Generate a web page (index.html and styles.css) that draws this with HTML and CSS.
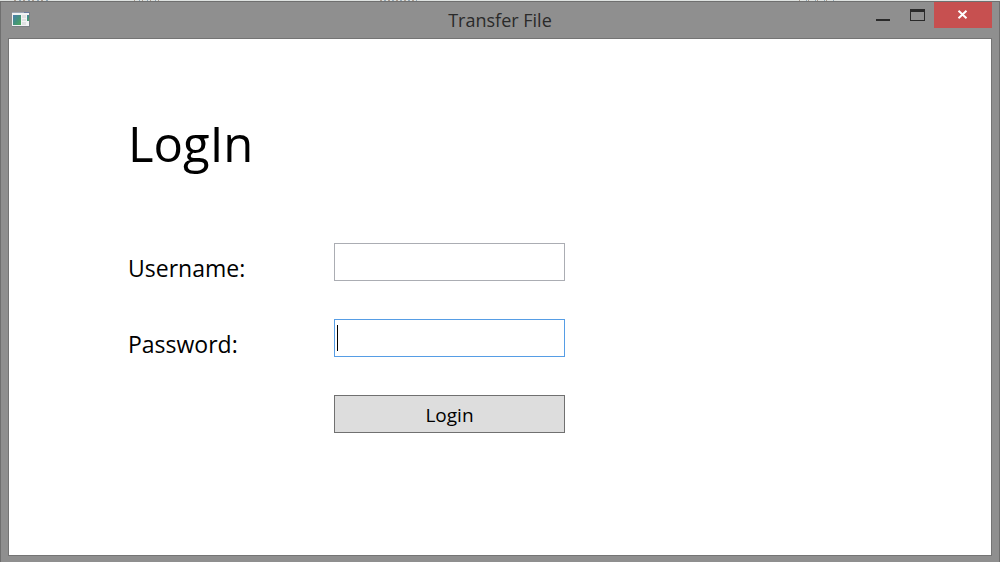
FILE: index.html
```html
<!DOCTYPE html>
<html lang="en">
<head>
<meta charset="utf-8">
<title>Transfer File</title>
<link rel="stylesheet" href="styles.css">
</head>
<body>
<div class="desktop-edge"></div>
<div class="window">
  <header class="titlebar">
    <svg class="app-icon" width="18" height="15" viewBox="0 0 18 15" aria-hidden="true">
      <defs>
        <linearGradient id="pane" x1="0" y1="0" x2="1" y2="1">
          <stop offset="0" stop-color="#4a7db0"/>
          <stop offset="0.5" stop-color="#43917f"/>
          <stop offset="1" stop-color="#4faa5b"/>
        </linearGradient>
      </defs>
      <rect x="0" y="0" width="18" height="15" fill="#7b8086"/>
      <rect x="0" y="0" width="12" height="1" fill="#9ea6b4"/>
      <rect x="12" y="0" width="5" height="1" fill="#6a7ba0"/>
      <rect x="0" y="1" width="17" height="13" fill="#f2f3f4"/>
      <rect x="1" y="3" width="8" height="10" fill="url(#pane)"/>
      <path d="M10 3h4v3h-4zM10 7h4v2h-4zM10 10h4v3h-4z" fill="#dfe1e2"/>
      <rect x="15" y="3" width="2" height="6" fill="url(#pane)"/>
    </svg>
    <h2 class="title">Transfer File</h2>
    <div class="controls">
      <button class="control" type="button" aria-label="Minimize">
        <svg width="14" height="12" viewBox="0 0 14 12"><rect y="10" width="14" height="2" fill="#2a2a2a"/></svg>
      </button>
      <button class="control" type="button" aria-label="Maximize">
        <svg width="15" height="12" viewBox="0 0 15 12"><path d="M0 0h15v12H0zM1 3v8h13V3z" fill="#2a2a2a" fill-rule="evenodd"/></svg>
      </button>
      <button class="control close" type="button" aria-label="Close">
        <svg width="12" height="10" viewBox="0 0 12 10"><path d="M1.500 0.800L9.500 8.200M9.500 0.800L1.500 8.200" stroke="#fff" stroke-width="2"/></svg>
      </button>
    </div>
  </header>
  <main class="client">
    <h1 class="heading">LogIn</h1>
    <form class="form">
      <label class="label" for="username">Username:</label>
      <input class="field" id="username" type="text">
      <label class="label" for="password">Password:</label>
      <div class="field-wrap">
        <input class="field active" id="password" type="password">
        <span class="caret"></span>
      </div>
      <button class="submit" type="button">Login</button>
    </form>
  </main>
</div>
</body>
</html>
```
FILE: styles.css
```css
* {
  box-sizing: border-box;
}

body {
  margin: 0;
  min-height: 100vh;
  display: flex;
  flex-direction: column;
  font-family: "Open Sans", "Noto Sans", sans-serif;
  color: #000;
  background: #8f8f8f;
}

.desktop-edge {
  height: 1px;
  background:
    repeating-linear-gradient(90deg, #a99a8c 0 2px, #dfe3e1 2px 5px, #8fa5b5 5px 7px, #dfe3e1 7px 9px) 14px 0 / 35px 1px no-repeat,
    repeating-linear-gradient(90deg, #a99a8c 0 1px, #dfe3e1 1px 5px, #8fa5b5 5px 6px, #dfe3e1 6px 8px) 134px 0 / 28px 1px no-repeat,
    repeating-linear-gradient(90deg, #a99a8c 0 2px, #dfe3e1 2px 4px, #8fa5b5 4px 6px, #dfe3e1 6px 8px) 380px 0 / 37px 1px no-repeat,
    repeating-linear-gradient(90deg, #a99a8c 0 1px, #dfe3e1 1px 7px, #8fa5b5 7px 8px, #dfe3e1 8px 9px) 799px 0 / 36px 1px no-repeat,
    #dfe3e1;
}

.window {
  flex: 1;
  display: flex;
  flex-direction: column;
  padding: 0 7px 6px;
  border: 1px solid #6f6f6f;
  border-bottom: 0;
}

.titlebar {
  display: grid;
  grid-template-columns: 1fr auto 1fr;
  height: 36px;
}

.app-icon {
  margin: 10px 0 0 4px;
}

.title {
  margin: 0;
  font-size: 18px;
  font-weight: 400;
  line-height: 36px;
  color: #2a2a2a;
}

.controls {
  display: flex;
  justify-content: flex-end;
  align-items: flex-start;
}

.control {
  display: flex;
  align-items: center;
  justify-content: center;
  width: 34px;
  height: 26px;
  padding: 0;
  border: 0;
  background: transparent;
}

.close {
  width: 58px;
  background: #c75050;
}

.client {
  flex: 1;
  padding: 70px 119px;
  border: 1px solid #747474;
  background: #fff;
}

.heading {
  margin: 0 0 66px;
  font-size: 49px;
  font-weight: 400;
  line-height: 68px;
}

.form {
  display: grid;
  grid-template-columns: 206px minmax(0, 231px);
  row-gap: 38px;
}

.label {
  padding-top: 6px;
  font-size: 23px;
  line-height: 38px;
  height: 38px;
}

.field {
  width: 100%;
  height: 38px;
  padding: 0 4px;
  border: 1px solid #abadb3;
  border-radius: 0;
  outline: 0;
  font: inherit;
  font-size: 23px;
  background: #fff;
}

.active {
  border-color: #569de5;
}

.field-wrap {
  position: relative;
}

.caret {
  position: absolute;
  top: 6px;
  left: 3px;
  width: 1px;
  height: 26px;
  background: #000;
}

.submit {
  grid-column: 2;
  height: 38px;
  padding: 2px 0 0;
  border: 1px solid #707070;
  border-radius: 0;
  font: inherit;
  font-size: 19px;
  color: #000;
  background: #ddd;
}
```
